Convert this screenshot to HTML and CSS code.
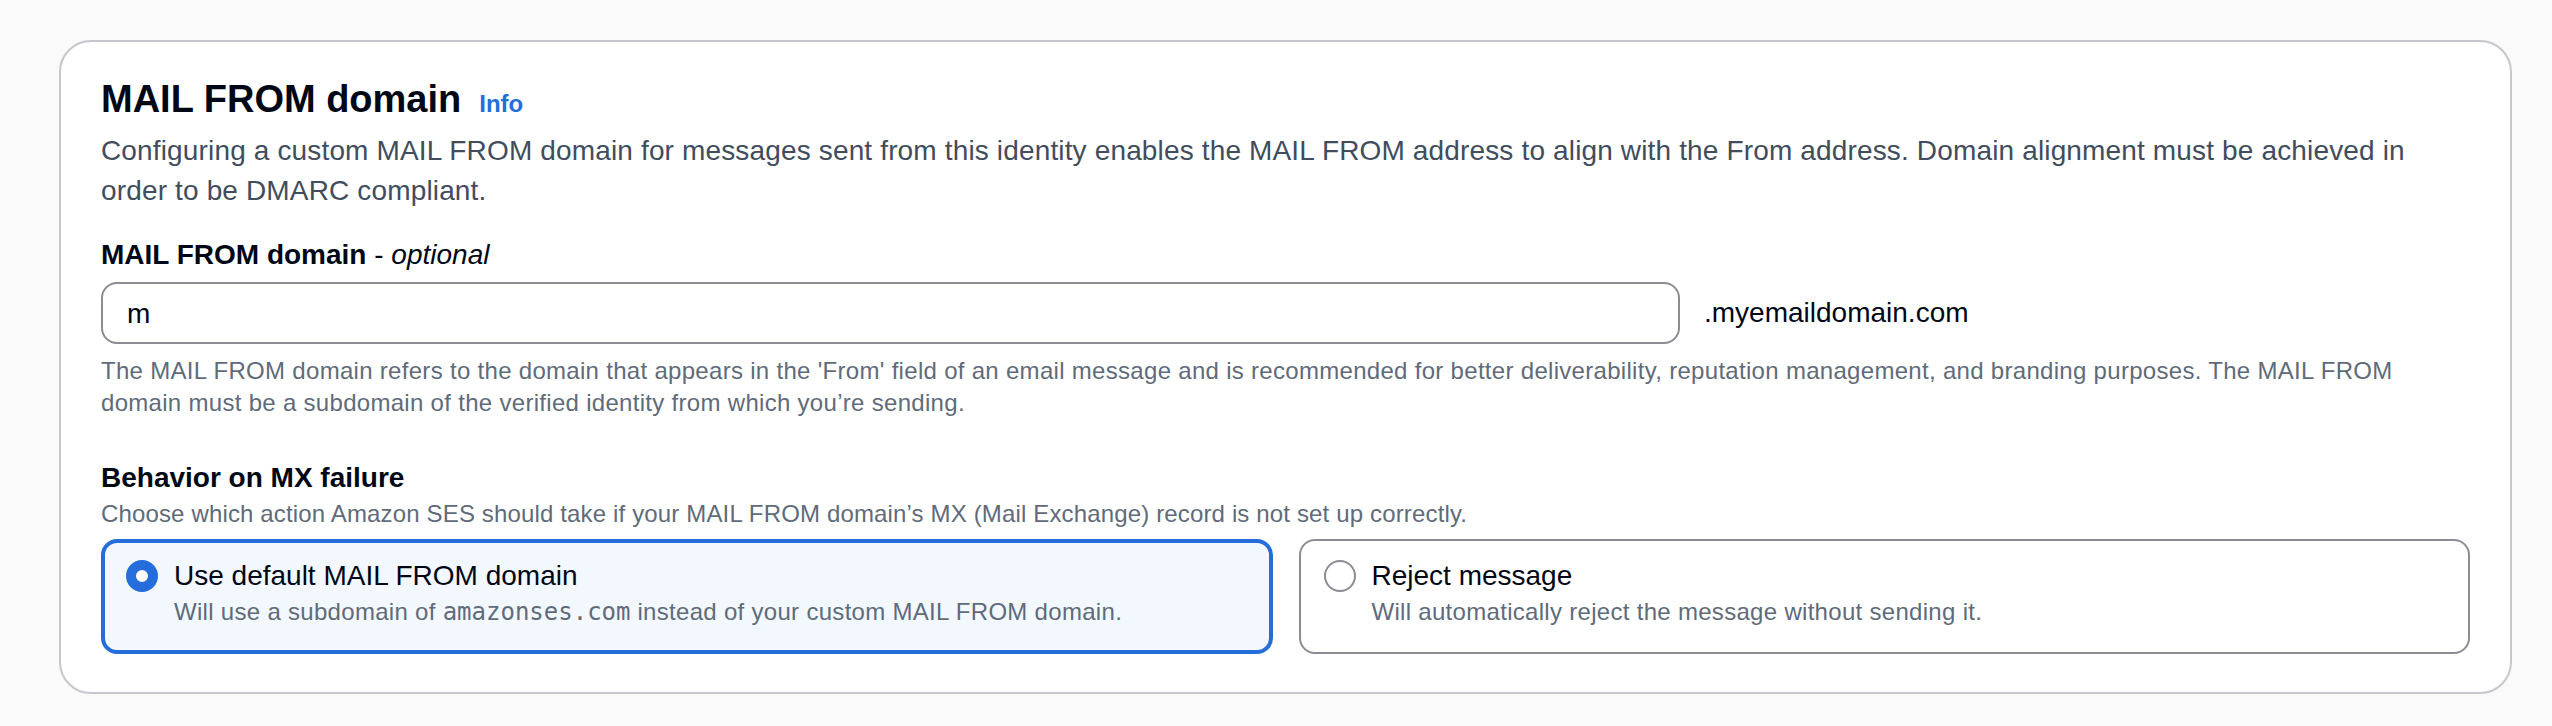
FILE: index.html
```html
<!DOCTYPE html>
<html lang="en">
<head>
<meta charset="utf-8">
<title>MAIL FROM domain</title>
<link rel="stylesheet" href="styles.css">
</head>
<body>
<div class="page">
  <section class="card">
    <header class="card-header">
      <h2 class="title"><span>MAIL FROM domain</span><a class="info" href="#">Info</a></h2>
      <p class="desc">Configuring a custom MAIL FROM domain for messages sent from this identity enables the MAIL FROM address to align with the From address. Domain alignment must be achieved in order to be DMARC compliant.</p>
    </header>

    <div class="field">
      <div class="label">MAIL FROM domain <span class="opt">- <i>optional</i></span></div>
      <div class="input-row">
        <div class="input">m</div>
        <span class="suffix">.myemaildomain.com</span>
      </div>
      <div class="hint">The MAIL FROM domain refers to the domain that appears in the 'From' field of an email message and is recommended for better deliverability, reputation management, and branding purposes. The MAIL FROM domain must be a subdomain of the verified identity from which you’re sending.</div>
    </div>

    <div class="field field-mx">
      <div class="label">Behavior on MX failure</div>
      <div class="field-desc">Choose which action Amazon SES should take if your MAIL FROM domain’s MX (Mail Exchange) record is not set up correctly.</div>
      <div class="tiles">
        <div class="tile tile-selected">
          <span class="radio radio-checked"></span>
          <div class="tile-text">
            <div class="tile-label">Use default MAIL FROM domain</div>
            <div class="tile-desc">Will use a subdomain of <code>amazonses.com</code> instead of your custom MAIL FROM domain.</div>
          </div>
        </div>
        <div class="tile">
          <span class="radio"></span>
          <div class="tile-text">
            <div class="tile-label">Reject message</div>
            <div class="tile-desc">Will automatically reject the message without sending it.</div>
          </div>
        </div>
      </div>
    </div>
  </section>
</div>
</body>
</html>
```

FILE: styles.css
```css
* { box-sizing: border-box; }

html, body {
  margin: 0;
  padding: 0;
  background: #fafafa;
}

body {
  font-family: "Liberation Sans", Arial, sans-serif;
  color: #000716;
}

.page {
  padding: 40px 40px 35px 59px;
}

.card {
  background: #ffffff;
  border: 2px solid #c6c6cd;
  border-radius: 32px;
  padding: 33px 40px 38px 40px;
}

.title {
  display: flex;
  align-items: baseline;
  gap: 18px;
  margin: 0;
  font-size: 38px;
  line-height: 48px;
  font-weight: 700;
  color: #000716;
}

.info {
  font-size: 24px;
  font-weight: 700;
  color: #266ddc;
  text-decoration: none;
}

.desc {
  margin: 3px 0 0 0;
  font-size: 28px;
  line-height: 40px;
  letter-spacing: 0.15px;
  color: #414d5c;
}

.field {
  margin-top: 24px;
}

.field-mx {
  margin-top: 39px;
}

.label {
  font-size: 28px;
  line-height: 40px;
  font-weight: 700;
  color: #000716;
}

.opt {
  font-weight: 400;
}

.input-row {
  display: flex;
  align-items: center;
  gap: 24px;
  margin-top: 7px;
}

.input {
  width: 1579px;
  height: 62px;
  border: 2px solid #8c8c94;
  border-radius: 16px;
  padding: 2px 0 0 24px;
  display: flex;
  align-items: center;
  font-size: 28px;
  line-height: 40px;
  color: #000716;
}

.suffix {
  font-size: 28px;
  line-height: 40px;
  color: #000716;
}

.hint {
  margin-top: 11px;
  font-size: 24px;
  line-height: 32px;
  letter-spacing: 0.3px;
  color: #5f6b7a;
}

.field-desc {
  font-size: 24px;
  line-height: 32px;
  letter-spacing: 0.15px;
  color: #5f6b7a;
}

.tiles {
  display: grid;
  grid-template-columns: 1fr 1fr;
  gap: 26px;
  margin-top: 9px;
}

.tile {
  display: flex;
  align-items: flex-start;
  gap: 16px;
  height: 115px;
  border: 2px solid #8c8c94;
  border-radius: 16px;
  padding: 15px 23px 0 23px;
  background: #ffffff;
}

.tile-selected {
  border: 4px solid #266ddc;
  background: #f2f8fd;
  padding: 13px 21px 0 21px;
}

.radio {
  flex: 0 0 32px;
  width: 32px;
  height: 32px;
  margin-top: 4px;
  border-radius: 50%;
  border: 2px solid #8c8c94;
  background: #ffffff;
}

.radio-checked {
  border: 10px solid #266ddc;
  background: #ffffff;
}

.tile-label {
  font-size: 28px;
  line-height: 40px;
  color: #000716;
}

.tile-desc {
  font-size: 24px;
  line-height: 32px;
  letter-spacing: 0.3px;
  color: #5f6b7a;
}

.tile-desc code {
  font-family: "DejaVu Sans Mono", "Liberation Mono", monospace;
  font-size: 24px;
  letter-spacing: 0;
}
```
